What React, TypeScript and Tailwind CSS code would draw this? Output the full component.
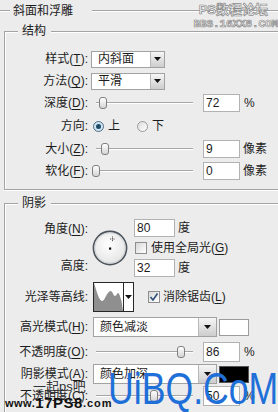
import React from "react";

const Line = ({ className = "" }: { className?: string }) => (
  <div className={`h-[2px] border-t border-[#a3a3a3] bg-white ${className}`} />
);

const Label = ({ children }: { children: React.ReactNode }) => (
  <div className="w-[83px] shrink-0 whitespace-nowrap text-right">{children}</div>
);

const U = ({ children }: { children: React.ReactNode }) => (
  <span className="underline decoration-1 underline-offset-[2px]">{children}</span>
);

const Tri = () => (
  <svg width="7" height="4" viewBox="0 0 7 4">
    <path d="M0 0 L7 0 L3.5 4 Z" fill="#111" />
  </svg>
);

const Select = ({ text, className, btn }: { text: string; className: string; btn: string }) => (
  <div className={`flex shrink-0 border border-[#a2a2a2] bg-white ${className}`}>
    <div className="flex flex-1 items-center pl-[6px]">{text}</div>
    <div
      className={`flex items-center justify-center border-l border-[#b8b8b8] bg-linear-to-b from-[#f6f6f6] to-[#cdcdcd] ${btn}`}
    >
      <Tri />
    </div>
  </div>
);

const Field = ({ value, className = "" }: { value: string; className?: string }) => (
  <div
    className={`flex h-[18px] w-[37px] shrink-0 items-center border border-[#b2b2b2] bg-white pl-[2px] ${className}`}
  >
    {value}
  </div>
);

const Slider = ({ left }: { left: number }) => (
  <div className="relative ml-[8px] h-[14px] w-[97px] shrink-0">
    <div className="absolute left-0 right-0 top-[6px] h-[2px] border-t border-[#a6a6a6] bg-white" />
    <div
      className="absolute top-[1px] h-[12px] w-[8px] rounded-[3px] border border-[#808080] bg-linear-to-b from-[#ffffff] to-[#d4d4d4]"
      style={{ left }}
    />
  </div>
);

const Radio = ({ checked }: { checked?: boolean }) =>
  checked ? (
    <div className="flex h-[11px] w-[11px] shrink-0 items-center justify-center rounded-full border border-[#4f6f86] bg-[#cfe3f1]">
      <div className="h-[5px] w-[5px] rounded-full bg-[#1d4a66]" />
    </div>
  ) : (
    <div className="h-[11px] w-[11px] shrink-0 rounded-full border border-[#9a9a9a] bg-linear-to-br from-[#dcdcdc] to-[#ffffff]" />
  );

const Check = ({ checked }: { checked?: boolean }) => (
  <div className="flex h-[12px] w-[12px] shrink-0 items-center justify-center border border-[#8e8e8e] bg-linear-to-br from-[#d8d8d8] to-[#ffffff]">
    {checked && (
      <svg width="10" height="10" viewBox="0 0 10 10">
        <path d="M1.5 5 L4 8 L8.5 1.5" stroke="#2d4f7a" strokeWidth="1.6" fill="none" />
      </svg>
    )}
  </div>
);

const Row = ({ children, className = "h-[22px]" }: { children: React.ReactNode; className?: string }) => (
  <div className={`flex items-center ${className}`}>{children}</div>
);

export default function App() {
  return (
    <div className="relative h-[412px] w-[278px] overflow-hidden bg-[#ececec] font-['Liberation_Sans','Noto_Sans_CJK_SC',sans-serif] text-[12px] leading-[16px] text-[#1c1c1c]">
      {/* section title */}
      <div className="flex h-[21px] items-center">
        <Line className="w-[10px]" />
        <span className="pl-[3px] pr-[19px]">斜面和浮雕</span>
        <Line className="flex-1" />
      </div>

      {/* 结构 */}
      <div className="ml-[4px] mt-[10px] border-b border-l border-t border-[#a3a3a3] pb-[7px] shadow-[inset_1px_1px_0_#fff,0_1px_0_#fff]">
        <div className="-mt-[9px] ml-[13px] h-[16px] w-fit bg-[#ececec] pl-[4px] pr-[5px]">结构</div>
        <div className="mt-[9px]">
          <Row>
            <Label>
              样式(<U>T</U>):
            </Label>
            <Select text="内斜面" className="ml-[3px] h-[17px] w-[74px]" btn="w-[14px]" />
          </Row>
          <Row>
            <Label>
              方法(<U>Q</U>):
            </Label>
            <Select text="平滑" className="ml-[3px] h-[17px] w-[74px]" btn="w-[14px]" />
          </Row>
          <Row>
            <Label>
              深度(<U>D</U>):
            </Label>
            <Slider left={3} />
            <Field value="72" className="ml-[10px]" />
            <span className="ml-[4px]">%</span>
          </Row>
          <Row className="h-[24px]">
            <Label>方向:</Label>
            <div className="ml-[5px]">
              <Radio checked />
            </div>
            <span className="ml-[4px]">上</span>
            <div className="ml-[17px]">
              <Radio />
            </div>
            <span className="ml-[4px]">下</span>
          </Row>
          <Row>
            <Label>
              大小(<U>Z</U>):
            </Label>
            <Slider left={5} />
            <Field value="9" className="ml-[10px]" />
            <span className="ml-[3px]">像素</span>
          </Row>
          <Row>
            <Label>
              软化(<U>F</U>):
            </Label>
            <Slider left={-4} />
            <Field value="0" className="ml-[10px]" />
            <span className="ml-[3px]">像素</span>
          </Row>
        </div>
      </div>

      {/* 阴影 */}
      <div className="ml-[4px] mt-[13px] border-l border-t border-[#a3a3a3] pb-[20px] shadow-[inset_1px_1px_0_#fff]">
        <div className="-mt-[9px] ml-[13px] h-[16px] w-fit bg-[#ececec] pl-[4px] pr-[5px]">阴影</div>

        <div className="mt-[7px] flex h-[60px]">
          <div className="flex w-[83px] shrink-0 flex-col justify-between text-right">
            <div className="flex h-[22px] items-center justify-end">
              角度(<U>N</U>):
            </div>
            <div className="mb-[2px] flex h-[20px] items-center justify-end">高度:</div>
          </div>
          <div className="ml-[4px] flex w-[36px] items-center">
            <svg width="36" height="36" viewBox="0 0 36 36">
              <defs>
                <radialGradient id="dial" cx="45%" cy="40%" r="60%">
                  <stop offset="0%" stopColor="#ffffff" />
                  <stop offset="100%" stopColor="#e4e4e4" />
                </radialGradient>
              </defs>
              <circle cx="18" cy="18" r="16.6" fill="url(#dial)" stroke="#4b545c" strokeWidth="1.6" />
              <circle cx="18" cy="18" r="15.2" fill="none" stroke="#c9ccd0" strokeWidth="0.8" />
              <path d="M20.5 6.5 V11.5 M18 9 H23" stroke="#333" strokeWidth="0.9" strokeDasharray="1 0.8" />
              <rect x="17" y="17.5" width="2.2" height="2.2" fill="#111" />
            </svg>
          </div>
          <div className="ml-[6px] flex flex-col">
            <div className="flex h-[20px] items-center">
              <Field value="80" className="w-[41px]" />
              <span className="ml-[3px]">度</span>
            </div>
            <div className="flex h-[20px] items-center">
              <div className="ml-[1px]">
                <Check />
              </div>
              <span className="ml-[4px]">
                使用全局光(<U>G</U>)
              </span>
            </div>
            <div className="flex h-[20px] items-center">
              <Field value="32" className="w-[41px]" />
              <span className="ml-[3px]">度</span>
            </div>
          </div>
        </div>

        <Row className="mt-[3px] h-[32px]">
          <Label>光泽等高线:</Label>
          <div className="ml-[5px] flex h-[30px] w-[41px] shrink-0 border border-[#262626] bg-white">
            <svg width="29" height="28" viewBox="0 0 29 28" className="shrink-0">
              <path
                d="M0 0 C2 6 4 14 6.5 17 C8 19 9.5 18 11 15 C13 11 15 8 16.5 8 C18.5 8 19.5 13 21 13 C22.5 13 23 10 24 10 C25.5 10 26.5 15 27.5 18 L29 28 L0 28 Z"
                fill="#8f8f8f"
              />
            </svg>
            <div className="flex flex-1 items-center justify-center border-l border-[#262626]">
              <Tri />
            </div>
          </div>
          <div className="ml-[14px]">
            <Check checked />
          </div>
          <span className="ml-[3px]">
            消除锯齿(<U>L</U>)
          </span>
        </Row>

        <Row className="mt-[3px] h-[22px]">
          <Label>
            高光模式(<U>H</U>):
          </Label>
          <Select text="颜色减淡" className="ml-[5px] h-[20px] w-[124px]" btn="w-[18px]" />
          <div className="ml-[2px] h-[17px] w-[30px] border border-[#9c9c9c] bg-white" />
        </Row>
        <Row className="mt-[3px] h-[22px]">
          <Label>
            不透明度(<U>O</U>):
          </Label>
          <Slider left={81} />
          <Field value="86" className="ml-[10px] h-[20px]" />
          <span className="ml-[4px]">%</span>
        </Row>
        <Row>
          <Label>
            阴影模式(<U>A</U>):
          </Label>
          <Select text="颜色加深" className="ml-[5px] h-[20px] w-[124px]" btn="w-[18px]" />
          <div className="ml-[2px] h-[17px] w-[30px] border border-[#555] bg-black" />
        </Row>
        <Row>
          <Label>
            不透明度(<U>C</U>):
          </Label>
          <Slider left={54} />
          <Field value="50" className="ml-[10px] h-[20px]" />
          <span className="ml-[4px]">%</span>
        </Row>
      </div>

      {/* watermark top right */}
      <div className="absolute right-[10px] top-[2px] text-[13px] font-bold leading-[16px] text-[#f2f2f2] [-webkit-text-stroke:0.7px_#8a8a8a]">
        PS数程论坛
      </div>
      <div className="absolute right-[0px] top-[18px] font-['Liberation_Mono',monospace] text-[11px] font-bold leading-[12px] tracking-[-0.1px] text-[#f2f2f2] [-webkit-text-stroke:0.7px_#8a8a8a]">
        BBS.16XX8.COM
      </div>

      {/* watermark bottom */}
      <div className="absolute left-[33px] top-[379px] text-[13px] leading-[16px] text-[#333]">一起ps吧</div>
      <div className="absolute left-[5px] top-[396px] flex items-end font-['Liberation_Sans',sans-serif] font-black leading-[14px] text-[#111]">
        <span className="text-[11px] tracking-[0.5px]">www.</span>
        <span className="text-[15px] tracking-[0.5px]">17PS8</span>
        <span className="text-[11px] tracking-[1px]">.com</span>
      </div>
      <div className="absolute left-[108px] top-[367px] origin-left scale-x-[0.81] font-['Liberation_Sans',sans-serif] text-[44px] leading-[44px] text-[#1f6fd8]">
        UiBQ.CoM
      </div>
    </div>
  );
}
